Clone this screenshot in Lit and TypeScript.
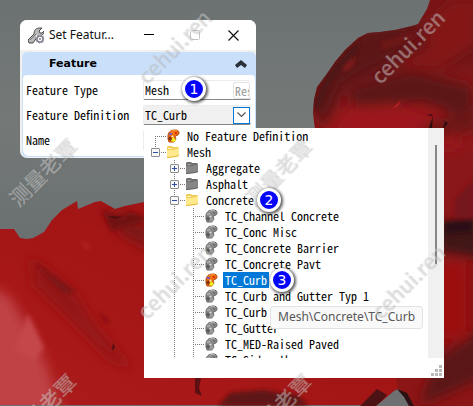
import { LitElement, html, svg, css, nothing } from "lit";
import { customElement, state } from "lit/decorators.js";
import { classMap } from "lit/directives/class-map.js";
import { styleMap } from "lit/directives/style-map.js";

type Icon = "palette" | "palette-off" | "folder" | "folder-off";

interface Row {
  label: string;
  level: number;
  icon: Icon;
  open?: boolean;
  first?: boolean;
  last?: boolean;
  badge?: string;
}

const ROWS: Row[] = [
  { label: "No Feature Definition", level: 0, icon: "palette", first: true },
  { label: "Mesh", level: 0, icon: "folder", open: true, last: true },
  { label: "Aggregate", level: 1, icon: "folder-off", open: false },
  { label: "Asphalt", level: 1, icon: "folder-off", open: false },
  { label: "Concrete", level: 1, icon: "folder", open: true, badge: "2" },
  { label: "TC_Channel Concrete", level: 2, icon: "palette-off" },
  { label: "TC_Conc Misc", level: 2, icon: "palette-off" },
  { label: "TC_Concrete Barrier", level: 2, icon: "palette-off" },
  { label: "TC_Concrete Pavt", level: 2, icon: "palette-off" },
  { label: "TC_Curb", level: 2, icon: "palette-off", badge: "3" },
  { label: "TC_Curb and Gutter Typ 1", level: 2, icon: "palette-off" },
  { label: "TC_Curb ", level: 2, icon: "palette-off" },
  { label: "TC_Gutter", level: 2, icon: "palette-off" },
  { label: "TC_MED-Raised Paved", level: 2, icon: "palette-off" },
  { label: "TC_Sidewalk", level: 2, icon: "palette-off" },
];

const MARKS = [
  { text: "cehui.ren", x: 173, y: 46 },
  { text: "cehui.ren", x: 407, y: 46 },
  { text: "测量老覃", x: 42, y: 172 },
  { text: "测量老覃", x: 277, y: 172 },
  { text: "cehui.ren", x: 173, y: 281 },
  { text: "cehui.ren", x: 407, y: 281 },
  { text: "测量老覃", x: 42, y: 407 },
  { text: "测量老覃", x: 277, y: 407 },
];

const paletteIcon = (on: boolean) => svg`
  <path d="M2 7C2 3 5 1 9 1c3 0 4 1 4 3 0 3-4 2-4 4l1 2-2 3-5 0-1-3z"
    fill=${on ? "#f07010" : "#8a8a8a"} stroke=${on ? "#b04a10" : "#666"} stroke-width="1"/>
  <path d="M5 3c2-2 4-2 6-1" fill="none" stroke=${on ? "#ff9830" : "#b4b4b4"} stroke-width="1"/>
  <rect x="3" y="4" width="3" height="2" fill=${on ? "#8058b8" : "#aaa"}/>
  <circle cx="6.500" cy="7.500" r="1" fill=${on ? "#ffe8c0" : "#e4e4e4"}/>
  <rect x="9" y="3" width="2" height="2" fill=${on ? "#e02c08" : "#707070"}/>
  <path d="M2 10l2-3 2 3-1 2z" fill=${on ? "#7c2c10" : "#5a5a5a"}/>
  <path d="M5 12l2-4 3 3-2 2z" fill=${on ? "#f0f020" : "#9c9c9c"}/>`;

const folderIcon = (on: boolean) => svg`
  <path d="M1 2l1-1h4l1 1h5l1 1v8H1z" fill=${on ? "#f2cc58" : "#6e6e6e"}/>
  <path d="M2 3h4v1H2z" fill=${on ? "#fff6c8" : "#a4a4a4"}/>
  <path d="M1 5h6l6-2v8l-3 1-9 1z" fill=${on ? "#ffe98c" : "#868686"}/>
  <path d="M1 12l9-1 3-1v1l-3 1-9 1z" fill=${on ? "#e6b840" : "#666"}/>`;

@customElement("app-root")
export class AppRoot extends LitElement {
  static styles = css`
    :host {
      display: block;
      --mono: "Noto Sans CJK SC", "Liberation Mono", monospace;
      --accent: #0078d7;
      --band: #c9dffa;
    }
    * { box-sizing: border-box; }
    button, input {
      font: inherit;
      color: inherit;
      margin: 0;
      padding: 0;
      border: 0;
      border-radius: 0;
      background: none;
      outline: 0;
    }
    svg { display: block; }
    main {
      position: relative;
      min-height: 100vh;
      padding: 20px;
      overflow: hidden;
    }
    .scene { position: absolute; inset: 0; width: 100%; height: 100%; }
    .dialog {
      position: relative;
      width: 236px;
      padding: 0 0 1px 2px;
      border-radius: 7px;
      background: #f0f0f0;
    }
    .titlebar {
      display: flex;
      align-items: center;
      height: 30px;
      margin-left: -2px;
      padding: 0 8px;
      border-radius: 7px 7px 0 0;
      background: #fff;
      font: 12px/16px "Noto Sans", sans-serif;
      color: #111;
    }
    .title { margin: 0 auto 0 5px; font: inherit; white-space: nowrap; }
    .winbtns { display: flex; }
    .winbtns button { display: grid; place-items: center; width: 46px; height: 28px; }
    .winbtns button:last-child { width: 30px; }
    .panel {
      margin-top: 2px;
      padding: 0 1px 1px;
      border-radius: 5px;
      background: var(--band);
    }
    .band {
      display: flex;
      align-items: center;
      justify-content: space-between;
      width: 100%;
      height: 23px;
      padding: 0 8px 0 26px;
      font: bold 11px/16px "DejaVu Sans", sans-serif;
      color: #000;
    }
    .form {
      display: grid;
      gap: 5px;
      padding: 5px 4px 6px 3px;
      border-radius: 4px 4px 6px 6px;
      background: #fff;
      font: 12px/16px var(--mono);
      font-feature-settings: "hwid";
      color: #000;
    }
    .field { display: grid; grid-template-columns: 117px 1fr; align-items: center; }
    .box {
      display: flex;
      align-items: center;
      height: 20px;
      padding: 0 1px;
      border: 1px solid #ececec;
      border-width: 1px 0 1px 1px;
      border-bottom-color: #868686;
      border-radius: 2px;
    }
    .box input { flex: 1; min-width: 0; width: 0; height: 16px; font-feature-settings: "hwid"; }
    .anchor { position: relative; }
    .combo { background: #f0f0f0; }
    .reset {
      width: 17px;
      height: 17px;
      padding-left: 1px;
      border: 1px solid #e4e4e4;
      border-radius: 2px;
      overflow: hidden;
      text-align: left;
      color: #9a9a9a;
      line-height: 15px;
      font-feature-settings: "hwid";
    }
    .drop {
      display: grid;
      place-items: center;
      width: 17px;
      height: 17px;
      border: 1px solid var(--accent);
      background: #fff;
    }
    .popup {
      position: absolute;
      top: 22px;
      left: 0;
      width: 300px;
      background: #fff;
    }
    .view { display: flex; height: 230px; overflow: hidden; }
    .tree { flex: 1; margin: 0; padding: 0 0 0 2px; list-style: none; }
    .row { display: flex; align-items: center; height: 16px; }
    .cell {
      position: relative;
      flex: none;
      align-self: stretch;
      display: grid;
      place-items: center;
      width: 19px;
    }
    .line { position: absolute; }
    .v {
      left: 9px;
      top: 0;
      bottom: 0;
      width: 1px;
      background: repeating-linear-gradient(#777 0 1px, #fff 1px 2px);
    }
    .v.from { top: 8px; }
    .v.to { bottom: 8px; }
    .h {
      left: 9px;
      right: -1px;
      top: 8px;
      height: 1px;
      background: repeating-linear-gradient(90deg, #777 0 1px, #fff 1px 2px);
    }
    .toggle {
      position: relative;
      display: grid;
      place-items: center;
      width: 9px;
      height: 9px;
      border: 1px solid #8c8c8c;
      border-radius: 1px;
      background: #f8f8f8;
    }
    .icon { flex: none; width: 20px; padding-left: 1px; }
    .item { height: 16px; padding: 0 2px; white-space: pre; }
    .selected { background: var(--accent); color: #fff; }
    .row .badge { margin: -4px 0 -4px 1px; }
    .badge {
      position: relative;
      z-index: 6;
      flex: none;
      display: grid;
      place-items: center;
      width: 24px;
      height: 24px;
      border: 3px solid #fff;
      border-radius: 50%;
      background: #0404fa;
      box-shadow: 1px 1px 3px 1px rgba(0, 0, 0, 0.65);
      color: #fff;
      font: 14px/16px "DejaVu Sans", sans-serif;
      font-feature-settings: normal;
    }
    .step-one { position: absolute; left: 38px; top: -4px; }
    .track { width: 16px; padding: 17px 7px 0; background: #f0f0f0; }
    .thumb { height: 119px; background: #868686; }
    .foot { display: flex; justify-content: flex-end; height: 20px; padding: 7px 2px 0; }
    .tip {
      position: absolute;
      left: 126px;
      top: 178px;
      padding: 1px 7px 2px;
      border: 1px solid #e2e2e2;
      border-radius: 3px;
      background: #f9f9f9;
      color: #575757;
      font: 12px/18px "Noto Sans", sans-serif;
      font-feature-settings: normal;
      white-space: nowrap;
    }
    .marks { position: absolute; inset: 0; z-index: 5; pointer-events: none; }
    .mark {
      position: absolute;
      translate: -50% -50%;
      rotate: -45deg;
      white-space: nowrap;
      font: 500 21px/24px "Noto Sans CJK SC", sans-serif;
      color: rgba(225, 225, 225, 0.42);
      text-shadow: 1px 1px 1px rgba(90, 90, 90, 0.22);
    }
  `;

  @state() private selected = "TC_Curb";
  @state() private expanded = true;

  private scene() {
    return html`<svg class="scene" viewBox="0 0 473 406" preserveAspectRatio="xMidYMid slice" aria-hidden="true">
      <defs>
        <linearGradient id="sky" x1="0" y1="0" x2="0" y2="1">
          <stop offset="0" stop-color="#6c7172"/><stop offset=".3" stop-color="#747978"/><stop offset=".6" stop-color="#6a6f70"/>
        </linearGradient>
        <linearGradient id="right" x1="0" y1="0" x2=".1" y2="1">
          <stop offset="0" stop-color="#7c1518"/><stop offset=".1" stop-color="#771618"/><stop offset=".2" stop-color="#631517"/>
          <stop offset=".32" stop-color="#901719"/><stop offset=".5" stop-color="#8a1719"/><stop offset="1" stop-color="#8c1516"/>
        </linearGradient>
        <linearGradient id="left" x1="0" y1="1" x2="1" y2="0">
          <stop offset="0" stop-color="#ae1c1c"/><stop offset=".4" stop-color="#a51616"/><stop offset="1" stop-color="#9c1415"/>
        </linearGradient>
        <filter id="s1" x="-30%" y="-30%" width="160%" height="160%"><feGaussianBlur stdDeviation="2"/></filter>
        <filter id="s2" x="-30%" y="-30%" width="160%" height="160%"><feGaussianBlur stdDeviation="6"/></filter>
        <clipPath id="rc"><path d="M430 0l-3 9-9 15-6 2-17 4-15 2-12 1-10 5-13 12-10 12-9 13-9 12-3 13-1 13 2 17v276h190V0z"/></clipPath>
        <clipPath id="lc"><path d="M0 229h14l6 9 7 1 6-1 11-6 8-12 10-10 15-9 1 8 17-7 6-1 14 8 10-3 19-4h256v203H0z"/></clipPath>
      </defs>
      <rect width="473" height="406" fill="url(#sky)"/>
      <g clip-path="url(#lc)">
        <path d="M0 195h400v211H0z" fill="url(#left)"/>
        <g filter="url(#s2)">
          <path d="M-12 285l22 12 22 36 16 36 18 55H-12z" fill="#c04245"/>
          <path d="M30 256l44 34 20 34 40 46-24-10-44-44-32-30z" fill="#931315"/>
          <path d="M102 212l26 2 22 16v20l-26-14z" fill="#7c1214"/>
        </g>
        <g filter="url(#s1)">
          <path d="M34 262l28 20 14 10-12 2-16-16z" fill="#7c1214"/>
          <path d="M80 241l10 4-2 5z" fill="#b82828"/>
          <path d="M102 210l12 6 8 2 8-6 14 4v6l-22 4-10 6z" fill="#6c1214" opacity=".8"/>
          <path d="M14 350l14-36 16 34-10 12z" fill="#c54648"/>
          <path d="M98 312l10 8v5z" fill="#7a1012"/>
        </g>
        <path d="M108 216l15 1-8 2zM113 343l2 4-3 4z" fill="#4a1012"/>
      </g>
      <g clip-path="url(#rc)">
        <path d="M300 0h173v406h-73l-4-28H300z" fill="url(#right)"/>
        <g filter="url(#s2)">
          <path d="M310 100L365 30l60-8-30 34-52 28-20 46z" fill="#5c1517"/>
          <path d="M350 88l60-16 63 14v34l-50-18-70 4z" fill="#5c1618"/>
          <path d="M345 108l55-2 50 12 10 30H320z" fill="#9c171a"/>
          <path d="M390 66l40-20-8-20 30-26h26v44l-40 26z" fill="#841719"/>
          <path d="M425 125l53-20v24l-60 14z" fill="#6c1618"/>
          <path d="M436 225l50-6v40l-50-8z" fill="#3f1315"/>
          <path d="M432 262h34v76h-34z" fill="#9c1011"/>
          <path d="M436 360l50-34v50l-66 30z" fill="#5a1416"/>
        </g>
        <g filter="url(#s1)">
          <path d="M313 108l14-33 22-26 12-9-4 12-26 30-12 26z" fill="#4e1315"/>
          <path d="M344 67l12-11-4 10-9 6z" fill="#8c1b1e"/>
          <path d="M380 42l40-12-8 10-30 10z" fill="#6e1618"/>
          <path d="M455 200l18-20v40h-18z" fill="#74181a"/>
        </g>
        <path d="M392 109l9-9-3 6z" fill="#b82022"/>
        <path d="M429 128l4-12-6-1 4-1 2 2-1 12zM443 128l2-6-2-2 5 3-4 5z" fill="#2c0e10"/>
        <path d="M444 222l29-2v12l-29 2z" fill="#2c1012" filter="url(#s1)"/>
      </g>
      <path d="M218 406l12-13 34-3 16 3 18 2 10 11z" fill="#5e1214" filter="url(#s1)"/>
      <path d="M195 378h6l-2 10 3 8-7-3z" fill="#5c1012"/>
      <path d="M360 406l17-17 10 6-10 11z" fill="#4c1214"/>
      <path d="M376 406l18-15 4-2 8 6 3 11z" fill="#6e7071"/>
      <path d="M397 389l10 4 7 13h-5l-5-9z" fill="#2c1012"/>
    </svg>`;
  }

  private treeRow(row: Row) {
    const branch = row.open !== undefined;
    const on = row.label === this.selected;
    const palette = row.icon.startsWith("palette");
    const lit = on || !row.icon.endsWith("off");
    return html`<li class="row" role="treeitem" aria-level=${row.level + 1} aria-selected=${on}
      @click=${() => (this.selected = row.label)}>
      ${row.level > 0 ? html`<span class="cell"></span>` : nothing}
      ${row.level > 1 ? html`<span class="cell"><i class="line v"></i></span>` : nothing}
      <span class="cell">
        <i class=${classMap({ line: true, v: true, from: !!row.first, to: !!row.last })}></i>
        <i class="line h"></i>
        ${branch
          ? html`<button class="toggle" aria-label=${row.open ? "Collapse" : "Expand"}>
              <svg width="7" height="7" viewBox="0 0 7 7">
                <path d=${row.open ? "M1 3h5v1H1z" : "M1 3h5v1H1zM3 1h1v5H3z"} fill="#2a4fa8"/>
              </svg></button>`
          : nothing}
      </span>
      <span class="icon"><svg width="14" height="14" viewBox="0 0 14 14">
        ${palette ? paletteIcon(lit) : folderIcon(lit)}</svg></span>
      <span class=${classMap({ item: true, selected: on })}>${row.label}</span>
      ${row.badge ? html`<span class="badge">${row.badge}</span>` : nothing}
    </li>`;
  }

  private popup() {
    return html`<div class="popup">
      <div class="view">
        <ul class="tree" role="tree" aria-label="Feature Definition">
          ${ROWS.map((r) => this.treeRow(r))}
        </ul>
        <div class="track"><div class="thumb"></div></div>
      </div>
      <div class="foot">
        <svg width="12" height="12" viewBox="0 0 12 12" fill="#b9b9b9">
          <path d="M9 0h3v3H9zM9 4h3v3H9zM5 4h3v3H5zM9 8h3v3H9zM5 8h3v3H5zM1 8h3v3H1z"/>
        </svg>
      </div>
      <div class="tip" role="tooltip">Mesh\\Concrete\\TC_Curb</div>
    </div>`;
  }

  render() {
    return html`<main>
      ${this.scene()}
      <section class="dialog" role="dialog" aria-labelledby="title">
        <header class="titlebar">
          <svg width="16" height="17" viewBox="0 0 16 17">
            <path d="M1 16l-1-3 6-6c0-4 2-6 6-6l2 0-3 3 1 2 2 0 2-2c0 4-3 5-6 5l-5 7z" fill="#b9b9b9" stroke="#4a4a4a" stroke-width="1"/>
            <path d="M2 13l6-6" stroke="#777" stroke-width="1"/>
            <rect x="8" y="8" width="8" height="8" fill="#e8e8ee"/>
            <circle cx="12" cy="12" r="3" fill="#fff" stroke="#80808c" stroke-width="1.5"/>
            <circle cx="12" cy="12" r="4" fill="none" stroke="#80808c" stroke-width="1" stroke-dasharray="1.5 1.6"/>
            <circle cx="12" cy="12" r="1" fill="#80808c"/>
          </svg>
          <h1 class="title" id="title">Set Featur...</h1>
          <div class="winbtns">
            <button aria-label="Minimize"><svg width="10" height="10" viewBox="0 0 10 10"><path d="M0 4h10v1H0z"/></svg></button>
            <button aria-label="Maximize" disabled><svg width="10" height="10" viewBox="0 0 10 10"><rect x=".5" y=".5" width="9" height="9" rx="1" fill="none" stroke="#c4c4c4"/></svg></button>
            <button aria-label="Close"><svg width="11" height="11" viewBox="0 0 11 11"><path d="M.5.5l10 10M10.500.5l-10 10" stroke="#111" stroke-width="1.2"/></svg></button>
          </div>
        </header>
        <div class="panel">
          <button class="band" aria-expanded="true">
            <span>Feature</span>
            <svg width="12" height="8" viewBox="0 0 12 8"><path d="M6 0l6 5-2 3-4-3-4 3-2-3z" fill="#2b3138"/></svg>
          </button>
          <form class="form" @submit=${(e: Event) => e.preventDefault()}>
            <div class="field">
              <label for="type">Feature Type</label>
              <div class="box anchor">
                <input id="type" value="Mesh" />
                <button type="button" class="reset">Reset</button>
                <span class="badge step-one">1</span>
              </div>
            </div>
            <div class="field">
              <label for="definition">Feature Definition</label>
              <div class="box anchor combo">
                <input id="definition" readonly .value=${this.selected} />
                <button type="button" class="drop" aria-label="Open list" aria-expanded=${this.expanded}
                  @click=${() => (this.expanded = !this.expanded)}>
                  <svg width="9" height="6" viewBox="0 0 9 6"><path d="M.5.5l4 4 4-4" fill="none" stroke="#555" stroke-width="1.2"/></svg>
                </button>
                ${this.expanded ? this.popup() : nothing}
              </div>
            </div>
            <div class="field">
              <label for="name">Name</label>
              <div class="box"><input id="name" /></div>
            </div>
          </form>
        </div>
      </section>
      <div class="marks">
        ${MARKS.map((m) => html`<span class="mark" style=${styleMap({ left: `${m.x}px`, top: `${m.y}px` })}>${m.text}</span>`)}
      </div>
    </main>`;
  }
}
